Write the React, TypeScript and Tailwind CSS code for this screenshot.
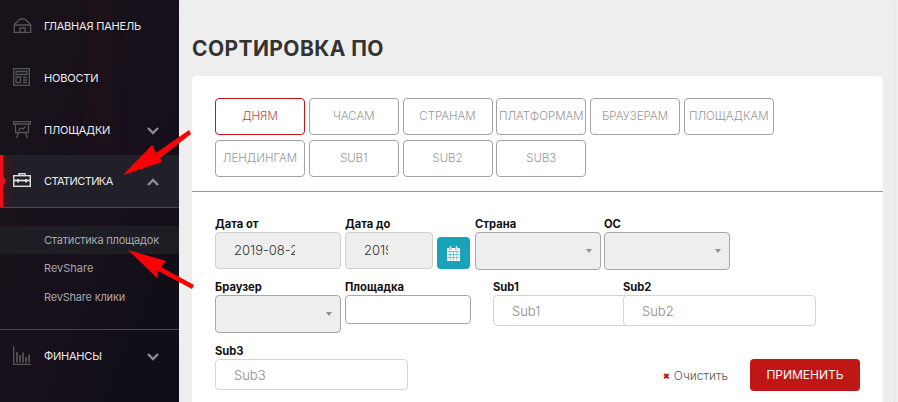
const font = "font-['Inter','Liberation_Sans',sans-serif]";

function HomeIcon() {
  return (
    <svg width="19" height="15" viewBox="0 0 19 15" fill="none" stroke="#55555a" strokeWidth="1.3">
      <path d="M1 7 L6 2 Q9.5 -0.5 13 2 L18 7" />
      <path d="M0.7 7 H18.3 M1.3 7 V14.4 H17.7 V7" />
      <path d="M7 14.4 V10 H12 V14.4" />
    </svg>
  );
}

function NewsIcon() {
  return (
    <svg width="17" height="18" viewBox="0 0 17 18" fill="none" stroke="#55555a" strokeWidth="1.3">
      <rect x="0.7" y="0.7" width="15.6" height="16.6" />
      <path d="M3 3.5 H14 V6.5 H3 Z" />
      <path d="M3 9 H7.5 V14.5 H3 Z" />
      <path d="M10 9.5 H14 M10 12 H14 M10 14.5 H14" />
    </svg>
  );
}

function BoardIcon() {
  return (
    <svg width="18" height="17" viewBox="0 0 18 17" fill="none" stroke="#55555a" strokeWidth="1.3">
      <path d="M0.7 0.7 H17.3 V3 H0.7 Z" />
      <path d="M2.5 3 V11.5 H15.5 V3" />
      <path d="M5.5 11.5 L3.5 17 M12.5 11.5 L14.5 17" />
      <path d="M5.5 9.5 L8 7 L10 8 L12.5 5.5" />
    </svg>
  );
}

function CaseIcon() {
  return (
    <svg width="18" height="14" viewBox="0 0 18 14" fill="none" stroke="#dedede" strokeWidth="1.4">
      <path d="M6 2.5 V0.7 H12 V2.5" />
      <rect x="0.7" y="2.7" width="16.6" height="10.6" />
      <path d="M0.7 7.5 H17.3" strokeWidth="1.8" />
      <path d="M5 6 V9.5 M13 6 V9.5" strokeWidth="1.8" />
    </svg>
  );
}

function BarsIcon() {
  return (
    <svg width="18" height="19" viewBox="0 0 18 19" fill="none" stroke="#55555a" strokeWidth="1.3">
      <path d="M0.7 0 V18.3 H18" />
      <path d="M4 16.5 V6 M7 16.5 V9 M10 16.5 V6.5 M13 16.5 V11 M16 16.5 V8.5" strokeWidth="1.7" />
    </svg>
  );
}

function Chevron({ up, color = "#8d8d92" }: { up?: boolean; color?: string }) {
  return (
    <svg width="12" height="8" viewBox="0 0 12 8" fill="none" stroke={color} strokeWidth="2.4">
      <path d={up ? "M1 7 L6 2 L11 7" : "M1 1 L6 6 L11 1"} />
    </svg>
  );
}

function MenuRow({
  icon,
  label,
  chevron,
  up,
  labelClass = "tracking-[-0.2px]",
}: {
  icon: React.ReactNode;
  label: string;
  chevron?: boolean;
  up?: boolean;
  labelClass?: string;
}) {
  return (
    <div className="flex h-[52px] items-center pl-[13px] pr-[20px] pt-[1px]">
      <div className="mb-[3px] flex w-[31px] justify-start">{icon}</div>
      <span className={"flex-1 text-[11px] font-normal text-[#ececee] " + labelClass}>{label}</span>
      {chevron && <Chevron up={up} />}
    </div>
  );
}

function Sidebar() {
  return (
    <aside className="relative h-[402px] w-[179px] shrink-0 bg-gradient-to-br from-[#18131a] via-[#17101a] to-[#0f0d16]">
      <div className="absolute left-[92px] top-0 h-[150px] w-[18px] bg-[#2a1216]/40 blur-[6px]" />
      <div className="relative">
        <MenuRow icon={<HomeIcon />} label="ГЛАВНАЯ ПАНЕЛЬ" />
        <MenuRow icon={<NewsIcon />} label="НОВОСТИ" />
        <MenuRow icon={<BoardIcon />} label="ПЛОЩАДКИ" chevron />
        <div className="relative -mt-[1px] border-b border-[#4a484d] bg-[#211f27]">
          <div className="absolute left-0 top-0 h-full w-[14px] bg-gradient-to-r from-[#5a1018]/70 to-transparent" />
          <div className="absolute left-0 top-0 h-full w-[3px] bg-[#ee0f1a]" />
          <div className="absolute left-[3px] top-[21px] h-0 w-0 border-y-[5px] border-l-[3px] border-y-transparent border-l-[#ee0f1a]" />
          <MenuRow icon={<CaseIcon />} label="СТАТИСТИКА" chevron up labelClass="tracking-[-0.6px]" />
        </div>
        <div className="flex h-[122px] flex-col border-b border-[#4a484d] pt-[18px] text-[11px] tracking-[-0.2px] text-[#a6a6ab]">
          <div className="flex h-[28px] items-center bg-[#1f1d24] pl-[44px]">Статистика площадок</div>
          <div className="flex h-[29px] items-center pl-[44px] tracking-normal">RevShare</div>
          <div className="flex h-[28px] items-center pl-[44px]">RevShare клики</div>
        </div>
        <MenuRow icon={<BarsIcon />} label="ФИНАНСЫ" chevron />
      </div>
    </aside>
  );
}

function SortButton({ label, active }: { label: string; active?: boolean }) {
  return (
    <div
      className={
        "flex h-[37px] w-[90px] items-center justify-center overflow-hidden whitespace-nowrap rounded-[4px] border text-[11.5px] font-light " +
        (active ? "border-[#c2161a] text-[#c2453f]" : "border-[#a3a3a3] text-[#979797]")
      }
    >
      {label}
    </div>
  );
}

function Label({ children }: { children: React.ReactNode }) {
  return <div className="h-[16px] text-[11.2px] font-bold leading-[17px] text-[#111]">{children}</div>;
}

function SelectBox({ className }: { className: string }) {
  return (
    <div className={"flex items-center justify-end rounded-[4px] border border-[#a8a8a8] bg-[#eeeeee] pr-[8px] " + className}>
      <div className="h-0 w-0 border-x-[3.5px] border-t-[4px] border-x-transparent border-t-[#8f8f8f]" />
    </div>
  );
}

function DateBox({ value, textWidth, className }: { value: string; textWidth: string; className: string }) {
  return (
    <div className={"flex items-center rounded-[4px] border border-[#cfcfcf] bg-[#eeeeee] pl-[18px] pt-[1px] text-[13px] font-light text-[#333] " + className}>
      <span className={"block overflow-hidden whitespace-nowrap " + textWidth}>{value}</span>
    </div>
  );
}

function TextBox({ value, className }: { value?: string; className: string }) {
  return (
    <div className={"flex items-center rounded-[4px] border border-[#d4d4d4] bg-white pl-[18px] pt-[2px] text-[13px] font-light text-[#8c8c8c] " + className}>
      {value}
    </div>
  );
}

function CalendarIcon() {
  return (
    <svg width="13" height="15" viewBox="0 0 13 15" fill="none">
      <path d="M0 2 H13 V15 H0 Z" fill="#fff" />
      <path d="M0.5 5.5 H12.5" stroke="#18a3b8" strokeWidth="0.6" />
      <path d="M3.2 5.5 V14.5 M6.5 5.5 V14.5 M9.8 5.5 V14.5 M0.5 8.5 H12.5 M0.5 11.5 H12.5" stroke="#5cbccb" strokeWidth="0.8" />
      <rect x="2.5" y="0" width="2" height="3.5" fill="#fff" stroke="#18a3b8" strokeWidth="0.5" />
      <rect x="8.5" y="0" width="2" height="3.5" fill="#fff" stroke="#18a3b8" strokeWidth="0.5" />
    </svg>
  );
}

export default function App() {
  const row1 = ["ЧАСАМ", "СТРАНАМ", "ПЛАТФОРМАМ", "БРАУЗЕРАМ", "ПЛОЩАДКАМ"];
  const row2 = ["ЛЕНДИНГАМ", "SUB1", "SUB2", "SUB3"];

  return (
    <div className={"relative flex h-[402px] w-[898px] overflow-hidden bg-[#eeeeee] " + font}>
      <Sidebar />
      <main className="flex-1 pl-[13px] pr-[15px]">
        <h1 className="mt-[36px] h-[26px] text-[21px] font-bold leading-[26px] tracking-[0.4px] text-[#333]">СОРТИРОВКА ПО</h1>
        <div className="mt-[14px] h-[340px] rounded-t-[5px] bg-white">
          <div className="flex h-[116px] flex-col gap-[5px] border-b border-[#9a9a9a] pl-[23px] pt-[22px]">
            <div className="flex gap-[3.75px]">
              <SortButton label="ДНЯМ" active />
              {row1.map((b) => (
                <SortButton key={b} label={b} />
              ))}
            </div>
            <div className="flex gap-[3.75px]">
              {row2.map((b) => (
                <SortButton key={b} label={b} />
              ))}
            </div>
          </div>

          <div className="pl-[23px] pt-[24px]">
            <div className="flex h-[63px] gap-[4px]">
              <div className="w-[126px]">
                <Label>Дата от</Label>
                <DateBox value="2019-08-20" textWidth="w-[61px]" className="h-[37px] w-[126px]" />
              </div>
              <div className="w-[126px]">
                <Label>Дата до</Label>
                <div className="flex items-end gap-[4px]">
                  <DateBox value="2019-08-20" textWidth="w-[24px]" className="h-[37px] w-[88px]" />
                  <div className="flex h-[32px] w-[33px] items-center justify-center rounded-[4px] bg-[#18a3b8]">
                    <CalendarIcon />
                  </div>
                </div>
              </div>
              <div className="w-[126px]">
                <Label>Страна</Label>
                <SelectBox className="h-[38px] w-[126px]" />
              </div>
              <div className="-ml-[1px] w-[126px]">
                <Label>ОС</Label>
                <SelectBox className="h-[38px] w-[126px]" />
              </div>
            </div>

            <div className="flex h-[64px] gap-[4px]">
              <div className="w-[126px]">
                <Label>Браузер</Label>
                <SelectBox className="h-[38px] w-[126px]" />
              </div>
              <div className="w-[144px]">
                <Label>Площадка</Label>
                <div className="h-[29px] w-[126px] rounded-[4px] border border-[#a8a8a8] bg-white" />
              </div>
              <div className="w-[126px]">
                <Label>Sub1</Label>
                <TextBox value="Sub1" className="h-[31px] w-[193px]" />
              </div>
              <div className="relative w-[126px]">
                <Label>Sub2</Label>
                <TextBox value="Sub2" className="h-[31px] w-[193px]" />
              </div>
            </div>

            <div className="flex items-end pr-[23px]">
              <div className="flex-1">
                <Label>Sub3</Label>
                <TextBox value="Sub3" className="h-[31px] w-[193px]" />
              </div>
              <div className="-mb-[1px] flex items-center gap-[22px]">
                <div className="flex items-center gap-[4px] pt-[1px] text-[12px] font-light text-[#555]">
                  <span className="text-[8px] font-bold leading-none text-[#c2161a]">✖</span>
                  Очистить
                </div>
                <div className="flex h-[32px] w-[110px] items-center justify-center rounded-[4px] bg-[#c01616] text-[12px] font-normal text-white">
                  ПРИМЕНИТЬ
                </div>
              </div>
            </div>
          </div>
        </div>
      </main>

      <div className="absolute right-0 top-0 h-full w-[4px] border-l border-dotted border-[#dcdcdc]" />

      <svg className="pointer-events-none absolute left-0 top-0" width="898" height="402" viewBox="0 0 898 402">
        <path d="M123 175 L152 145 L156 153 L189 130 L191 134 L160 158 L162 162 Z" fill="#fb0007" />
        <path d="M128 250 L166 261 L161 267 L194 285 L192 289 L158 271 L157 278 Z" fill="#fb0007" />
      </svg>
    </div>
  );
}
